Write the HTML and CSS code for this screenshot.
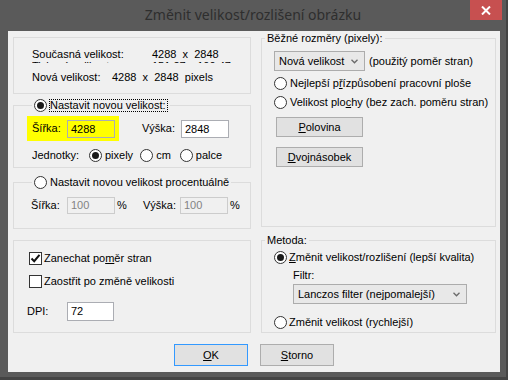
FILE: index.html
```html
<!DOCTYPE html>
<html>
<head>
  <meta charset="utf-8">
  <title>Změnit velikost/rozlišení obrázku</title>
  <link rel="stylesheet" href="styles.css">
</head>
<body>
  <div class="window">
    <div class="titlebar">
      <span class="title">Změnit velikost/rozlišení obrázku</span>
      <span class="close">
        <svg width="10" height="9" viewBox="0 0 10 9"><path d="M1 0.5 L9 8.5 M9 0.5 L1 8.5" stroke="#fff" stroke-width="2"/></svg>
      </span>
    </div>

    <div class="client">
      <div class="columns">
        <!-- levý sloupec -->
        <div class="col left">
          <div class="group info">
            <div class="clip">
              <div class="line"><span class="lbl-cur">Současná velikost:</span><span class="val">4288  x  2848</span></div>
              <div class="line"><span class="lbl-cur">Tisková velikost:</span><span class="val">151,27 x 100,47 cm</span></div>
            </div>
            <div class="line second"><span class="lbl-new">Nová velikost:</span><span class="val">4288  x  2848  pixels</span></div>
          </div>

          <fieldset class="group size">
            <legend><span class="leg"><span class="radio on"></span><span class="focus">Nastavit novou velikost:</span></span></legend>
            <div class="dims">
              <div class="hl">
                <span class="lbl-w">Šířka:</span>
                <span class="field yellow">4288</span>
              </div>
              <span class="lbl-h">Výška:</span>
              <span class="field">2848</span>
            </div>
            <div class="units">
              <span class="lbl-units">Jednotky:</span>
              <span class="radio on"></span><span class="opt">pixely</span>
              <span class="radio gap-cm"></span><span class="opt">cm</span>
              <span class="radio gap-palce"></span><span class="opt">palce</span>
            </div>
          </fieldset>

          <fieldset class="group pct">
            <legend><span class="leg"><span class="radio"></span><span class="opt">Nastavit novou velikost procentuálně</span></span></legend>
            <div class="pct-row">
              <span class="lbl-pw">Šířka:</span>
              <span class="field off">100</span>
              <span class="pc">%</span>
              <span class="lbl-ph">Výška:</span>
              <span class="field off">100</span>
              <span class="pc2">%</span>
            </div>
          </fieldset>

          <div class="group opts">
            <div class="check-row">
              <span class="check"><svg width="11" height="11" viewBox="0 0 11 11"><path d="M1.5 5.5 L4.2 8.2 L9.5 1.8" fill="none" stroke="#111" stroke-width="2"/></svg></span>
              <span class="opt2">Zanechat po<u>m</u>ěr stran</span>
            </div>
            <div class="check-row second">
              <span class="check"></span>
              <span class="opt2">Zaostřit po změně velikosti</span>
            </div>
            <div class="dpi-row">
              <span class="lbl-dpi">DPI:</span>
              <span class="field dpi">72</span>
            </div>
          </div>
        </div>

        <!-- pravý sloupec -->
        <div class="col right">
          <fieldset class="group common">
            <legend>Běžné rozměry (pixely):</legend>
            <div class="combo-row">
              <div class="combo small">
                <span>Nová velikost</span>
                <svg width="7" height="5" viewBox="0 0 7 5"><path d="M0.5 0.8 L3.5 3.8 L6.5 0.8" fill="none" stroke="#6a6a6a" stroke-width="1.3"/></svg>
              </div>
              <span class="note">(použitý poměr stran)</span>
            </div>
            <div class="radio-row">
              <span class="radio"></span><span class="opt">Nejlepší p<u>ř</u>ízpůsobení pracovní ploše</span>
            </div>
            <div class="radio-row">
              <span class="radio"></span><span class="opt">Velikost plo<u>c</u>hy (bez zach. poměru stran)</span>
            </div>
            <div class="btn half"><span><u>P</u>olovina</span></div>
            <div class="btn double"><span><u>D</u>vojnásobek</span></div>
          </fieldset>

          <fieldset class="group method">
            <legend>Metoda:</legend>
            <div class="radio-row first">
              <span class="radio on"></span><span class="opt"><u>Z</u>měnit velikost/rozlišení (lepší kvalita)</span>
            </div>
            <div class="filter-lbl">Filtr:</div>
            <div class="combo wide">
              <span>Lanczos filter (nejpomalejší)</span>
              <svg width="7" height="5" viewBox="0 0 7 5"><path d="M0.5 0.8 L3.5 3.8 L6.5 0.8" fill="none" stroke="#6a6a6a" stroke-width="1.3"/></svg>
            </div>
            <div class="radio-row last">
              <span class="radio"></span><span class="opt">Změnit velikost (rychlejší)</span>
            </div>
          </fieldset>
        </div>
      </div>

      <div class="actions">
        <div class="btn dlg default"><span><u>O</u>K</span></div>
        <div class="btn dlg"><span><u>S</u>torno</span></div>
      </div>
    </div>
  </div>
</body>
</html>
```

FILE: styles.css
```css
body {
  margin: 0;
  background: #444444;
}

.window {
  width: 506px;
  height: 377px;
  background: #5a5a5a;
  display: flex;
  flex-direction: column;
}

.titlebar {
  height: 31px;
  display: grid;
  grid-template-columns: 1fr auto 1fr;
}

.title {
  grid-column: 2;
  font-family: "Noto Sans", sans-serif;
  font-size: 14px;
  line-height: 30px;
  color: #2e2e2e;
}

.close {
  grid-column: 3;
  justify-self: end;
  width: 32px;
  height: 20px;
  margin-right: 4px;
  background: #c75050;
  display: flex;
  align-items: center;
  justify-content: center;
}

.client {
  margin: 0 6px 0 8px;
  height: 341px;
  background: #f0f0f0;
  font-family: "Liberation Sans", Arial, sans-serif;
  font-size: 11px;
  line-height: 13px;
  color: #000;
}

.columns {
  display: flex;
  gap: 10px;
  padding: 0 4px 0 5px;
}

.col {
  display: flex;
  flex-direction: column;
}

.left {
  width: 238px;
}

.right {
  width: 235px;
}

.group {
  box-sizing: border-box;
  border: 1px solid #dcdcdc;
  margin: 0;
  min-width: 0;
}

legend {
  padding: 0 2px;
  height: 13px;
  line-height: 13px;
}

.leg {
  display: flex;
  align-items: center;
  height: 13px;
}

/* horní informace */
.info {
  margin-top: 6px;
  height: 57px;
  padding: 10px 0 0 18px;
}

.clip {
  height: 15px;
  overflow: hidden;
}

.clip .line {
  line-height: 12px;
}

.line {
  white-space: pre;
}

.line.second {
  margin-top: 8px;
}

.lbl-cur {
  display: inline-block;
  width: 120px;
}

.lbl-new {
  display: inline-block;
  width: 80px;
}

/* nastavit novou velikost */
.size {
  margin-top: 5px;
  height: 69px;
  padding: 4px 0 0 13px;
}

.size legend,
.pct legend {
  margin-left: 5px;
}

.focus {
  margin-left: 2px;
  border: 1px dotted #000;
  line-height: 11px;
  padding: 0 1px 0 0;
}

.dims {
  display: flex;
  align-items: center;
  height: 25px;
}

.hl {
  width: 92px;
  height: 25px;
  box-sizing: border-box;
  padding-left: 5px;
  background: #ffff00;
  display: flex;
  align-items: center;
}

.lbl-w {
  width: 35px;
}

.lbl-h {
  margin-left: 23px;
  width: 39px;
}

.field {
  box-sizing: border-box;
  width: 48px;
  height: 18px;
  border: 1px solid #abadb3;
  background: #fff;
  padding-left: 3px;
  line-height: 16px;
}

.field.yellow {
  background: #ffff00;
}

.field.off {
  height: 17px;
  line-height: 15px;
  background: #f0f0f0;
  border-color: #cccccc;
  color: #838383;
}

.field.dpi {
  width: 47px;
  height: 19px;
  line-height: 17px;
}

.units {
  margin-top: 8px;
  height: 13px;
  padding-left: 5px;
  display: flex;
  align-items: center;
}

.lbl-units {
  width: 57px;
}

.opt {
  margin-left: 3px;
}

.gap-cm {
  margin-left: 7px;
}

.gap-palce {
  margin-left: 9px;
}

.radio {
  flex: none;
  box-sizing: border-box;
  width: 13px;
  height: 13px;
  border: 1px solid #333;
  border-radius: 50%;
  background: #fff;
  display: inline-flex;
  align-items: center;
  justify-content: center;
}

.radio.on::after {
  content: "";
  width: 7px;
  height: 7px;
  border-radius: 50%;
  background: #1a1a1a;
}

/* procentuálně */
.pct {
  margin-top: 8px;
  height: 53px;
  padding: 8px 0 0 13px;
}

.pct-row {
  display: flex;
  align-items: center;
  padding-left: 4px;
}

.lbl-pw {
  width: 36px;
}

.pc {
  margin-left: 2px;
  width: 26px;
}

.lbl-ph {
  width: 37px;
}

.pc2 {
  margin-left: 2px;
}

/* zaškrtávátka */
.opts {
  margin-top: 11px;
  height: 93px;
  padding: 11px 0 0 15px;
}

.check-row {
  display: flex;
  align-items: center;
  height: 13px;
}

.check-row.second {
  margin-top: 10px;
}

.check {
  box-sizing: border-box;
  width: 13px;
  height: 13px;
  border: 1px solid #333;
  background: #fff;
  display: flex;
  align-items: center;
  justify-content: center;
}

.opt2 {
  margin-left: 2px;
}

.dpi-row {
  margin-top: 14px;
  display: flex;
  align-items: center;
  margin-left: -2px;
}

.lbl-dpi {
  width: 40px;
}

/* pravý sloupec */
.common {
  margin-top: 1px;
  height: 195px;
  padding: 6px 0 0 12px;
}

.common legend,
.method legend {
  margin-left: -9px;
}

.combo-row {
  display: flex;
  align-items: center;
}

.combo {
  box-sizing: border-box;
  height: 20px;
  border: 1px solid #acacac;
  background: #e8e8e8;
  display: flex;
  align-items: center;
  justify-content: space-between;
  padding: 0 6px 0 4px;
}

.combo.small {
  width: 91px;
}

.combo.wide {
  width: 174px;
  margin: 2px 0 0 19px;
}

.note {
  margin-left: 4px;
}

.radio-row {
  display: flex;
  align-items: center;
  height: 13px;
  margin-top: 6px;
}

.btn {
  box-sizing: border-box;
  border: 1px solid #adadad;
  background: #e1e1e1;
  display: flex;
  align-items: center;
  justify-content: center;
}

.half,
.double {
  width: 87px;
  height: 20px;
  margin-left: 2px;
}

.half {
  margin-top: 8px;
}

.double {
  margin-top: 10px;
}

.method {
  margin-top: 7px;
  height: 99px;
  padding: 4px 0 0 12px;
}

.radio-row.first {
  margin-top: 0;
}

.radio-row.first .opt,
.radio-row.last .opt {
  margin-left: 2px;
}

.filter-lbl {
  margin: 5px 0 0 19px;
}

.radio-row.last {
  margin-top: 12px;
}

/* tlačítka dialogu */
.actions {
  display: flex;
  justify-content: center;
  gap: 12px;
  margin-top: 11px;
}

.dlg {
  width: 74px;
  height: 22px;
}

.default {
  border-color: #3399ff;
}
```
